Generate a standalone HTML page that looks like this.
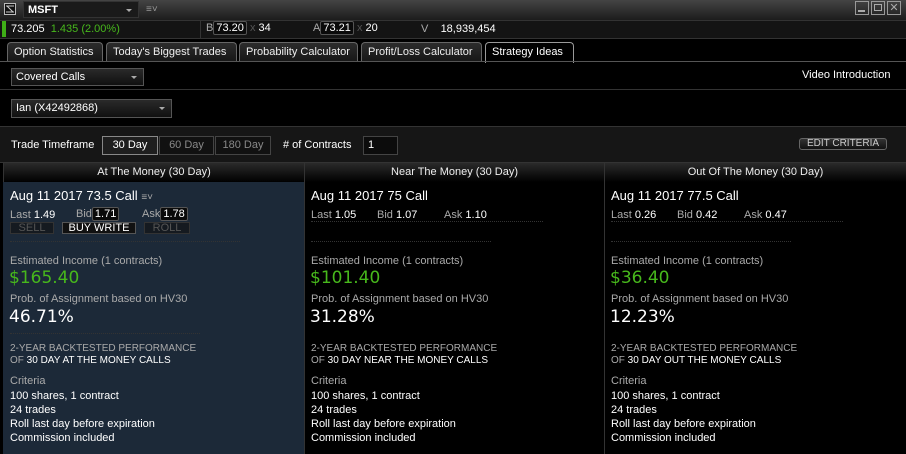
<!DOCTYPE html>
<html><head><meta charset="utf-8"><style>
*{margin:0;padding:0;box-sizing:border-box}
body{width:906px;height:454px;background:#000;font-family:"Liberation Sans",Tahoma,sans-serif;font-size:11px;color:#e8e8e8;position:relative;overflow:hidden}
.a{position:absolute;white-space:nowrap}
.dd{position:absolute;border:1px solid #555;background:linear-gradient(#2a2a2a,#101010);color:#fff;padding-left:4px;line-height:16px}
.dd:after{content:"";position:absolute;right:6px;top:7px;border-left:3px solid transparent;border-right:3px solid transparent;border-top:3px solid #aaa}
.tab{position:absolute;top:42px;height:20px;border:1px solid #666;border-bottom:none;border-radius:4px 4px 0 0;background:linear-gradient(#2c2c2c,#161616);color:#eee;line-height:19px;padding:0 6px}
.btn{position:absolute;border:1px solid #444;background:#111;color:#888;text-align:center;line-height:17px;font-size:11px}
.hdr{position:absolute;top:163px;height:19px;background:linear-gradient(#2a2a2a,#000);color:#eee;text-align:center;line-height:18px;border-left:1px solid #333}
.col{position:absolute;top:182px;height:272px}
.g{color:#aaa}.w{color:#fff}
.big{font-size:17px;color:#fff;font-family:"DejaVu Sans",sans-serif}
.grn{font-size:17px;color:#47b81c;font-family:"DejaVu Sans",sans-serif}
.dots{position:absolute;border-top:1px dotted #333;height:0}
.box{border:1px solid #555;border-radius:2px;padding:0 2px;background:#0a0a0a}
</style></head><body>
<div class="a" style="left:0;top:0;width:906px;height:20px;background:linear-gradient(#444,#1c1c1c)"></div>
<div class="a" style="left:4px;top:3px;width:12px;height:12px;border:1px solid #bbb;background:#111"><svg width="10" height="10" style="position:absolute;left:0;top:0"><path d="M1 2h8M1 8h8M2 2l6 6" stroke="#ccc" stroke-width="1"/></svg></div>
<div class="dd" style="left:23px;top:1px;width:116px;height:17px;font-weight:bold;background:#1a1a1a;border-color:#333">MSFT</div>
<div class="a" style="left:146px;top:4px;color:#999;font-size:10px">≡˅</div>
<div class="a" style="left:855px;top:1px;width:14px;height:14px;border:1px solid #999"></div>
<div class="a" style="left:858px;top:10px;width:7px;height:2px;background:#aaa"></div>
<div class="a" style="left:871px;top:1px;width:14px;height:14px;border:1px solid #999"></div>
<div class="a" style="left:874px;top:4px;width:8px;height:7px;border:1px solid #aaa"></div>
<div class="a" style="left:887px;top:1px;width:14px;height:14px;border:1px solid #999;color:#aaa;font-size:11px;text-align:center;line-height:12px">✕</div>
<div class="a" style="left:0;top:20px;width:906px;height:19px;background:#141414;border-top:1px solid #333;border-bottom:1px solid #333"></div>
<div class="a" style="left:200px;top:20px;width:1px;height:19px;background:#333"></div>
<div class="a" style="left:2px;top:21px;width:4px;height:16px;background:#3fae17"></div>
<div class="a" style="left:11px;top:23px;color:#fff">73.205 <span style="color:#47b81c">&nbsp;1.435 (2.00%)</span></div>
<div class="a" style="left:206px;top:22px;color:#aaa">B<span class="box" style="color:#fff">73.20</span> <span style="color:#555">x</span> <span style="color:#fff">34</span></div>
<div class="a" style="left:313px;top:22px;color:#aaa">A<span class="box" style="color:#fff">73.21</span> <span style="color:#555">x</span> <span style="color:#fff">20</span></div>
<div class="a" style="left:421px;top:23px;color:#aaa">V &nbsp;&nbsp;&nbsp;<span style="color:#fff">18,939,454</span></div>
<div class="tab" style="left:7px;width:96px">Option Statistics</div>
<div class="tab" style="left:106px;width:131px">Today's Biggest Trades</div>
<div class="tab" style="left:239px;width:119px">Probability Calculator</div>
<div class="tab" style="left:361px;width:121px">Profit/Loss Calculator</div>
<div class="tab" style="left:485px;width:89px;background:#000;border-color:#999;height:21px;color:#fff">Strategy Ideas</div>
<div class="a" style="left:0;top:61px;width:906px;height:1px;background:#555"></div>
<div class="dd" style="left:11px;top:68px;width:133px;height:18px">Covered Calls</div>
<div class="a" style="left:802px;top:69px;color:#fff">Video Introduction</div>
<div class="a" style="left:0;top:89px;width:906px;height:1px;background:#333"></div>
<div class="dd" style="left:11px;top:99px;width:161px;height:19px;line-height:17px">Ian (X42492868)</div>
<div class="a" style="left:0;top:126px;width:906px;height:1px;background:#333"></div>
<div class="a" style="left:0;top:127px;width:906px;height:36px;background:#161616"></div>
<div class="a" style="left:11px;top:139px;color:#fff">Trade Timeframe</div>
<div class="btn" style="left:102px;top:136px;width:56px;height:19px;border-color:#888;background:#1e1e1e;color:#fff">30 Day</div>
<div class="btn" style="left:159px;top:136px;width:55px;height:19px">60 Day</div>
<div class="btn" style="left:215px;top:136px;width:56px;height:19px">180 Day</div>
<div class="a" style="left:283px;top:139px;color:#fff"># of Contracts</div>
<div class="a" style="left:363px;top:136px;width:35px;height:19px;border:1px solid #444;background:#0c0c0c;color:#fff;padding-left:4px;line-height:17px">1</div>
<div class="btn" style="left:799px;top:138px;width:88px;height:12px;line-height:10px;font-size:10px;border-color:#666;border-radius:3px;background:linear-gradient(#333,#111);color:#ccc">EDIT CRITERIA</div>
<div class="a" style="left:0;top:162px;width:906px;height:1px;background:#333"></div>
<div class="hdr" style="left:3px;width:301px">At The Money (30 Day)</div>
<div class="hdr" style="left:304px;width:300px">Near The Money (30 Day)</div>
<div class="hdr" style="left:604px;width:302px">Out Of The Money (30 Day)</div>
<div class="col" style="left:3px;width:301px;background:#1c2938"></div>
<div class="col" style="left:304px;width:300px;border-left:1px solid #333"></div>
<div class="col" style="left:604px;width:302px;border-left:1px solid #333"></div>

<div class="a" style="left:10px;top:188px;font-size:13px;color:#fff">Aug 11 2017 73.5 Call <span style="font-size:10px;color:#aaa">≡˅</span></div>
<div class="a" style="left:10px;top:209px"><span class="g">Last</span> <span class="w">1.49</span></div>
<div class="a" style="left:76px;top:208px"><span class="g">Bid</span><span class="box w">1.71</span></div>
<div class="a" style="left:142px;top:208px"><span class="g">Ask</span><span class="box w">1.78</span></div>
<div class="btn" style="left:10px;top:222px;width:44px;height:12px;line-height:10px;color:#555;border-color:#333;background:#151a20">SELL</div>
<div class="btn" style="left:62px;top:222px;width:74px;height:12px;line-height:10px;color:#fff;border-color:#555;background:#111">BUY WRITE</div>
<div class="btn" style="left:144px;top:222px;width:46px;height:12px;line-height:10px;color:#555;border-color:#333;background:#151a20">ROLL</div>
<div class="dots" style="left:10px;top:241px;width:230px"></div>
<div class="a g" style="left:10px;top:255px">Estimated Income (1 contracts)</div>
<div class="a grn" style="left:9px;top:268px">$165.40</div>
<div class="a g" style="left:10px;top:293px">Prob. of Assignment based on HV30</div>
<div class="a big" style="left:9px;top:307px">46.71%</div>
<div class="dots" style="left:10px;top:333px;width:190px"></div>
<div class="a g" style="left:10px;top:343px;font-size:10px">2-YEAR BACKTESTED PERFORMANCE</div>
<div class="a" style="left:10px;top:355px;font-size:10px"><span class="g">OF</span> <span class="w">30 DAY AT THE MONEY CALLS</span></div>
<div class="a g" style="left:10px;top:375px">Criteria</div>
<div class="a w" style="left:10px;top:390px">100 shares, 1 contract</div>
<div class="a w" style="left:10px;top:404px">24 trades</div>
<div class="a w" style="left:10px;top:418px">Roll last day before expiration</div>
<div class="a w" style="left:10px;top:432px">Commission included</div>

<div class="a" style="left:311px;top:188px;font-size:13px;color:#fff">Aug 11 2017 75 Call</div>
<div class="a" style="left:311px;top:209px"><span class="g">Last</span> <span class="w">1.05</span></div>
<div class="a" style="left:377px;top:209px"><span class="g">Bid</span> <span class="w">1.07</span></div>
<div class="a" style="left:444px;top:209px"><span class="g">Ask</span> <span class="w">1.10</span></div>
<div class="dots" style="left:311px;top:221px;width:232px"></div>
<div class="dots" style="left:311px;top:241px;width:180px"></div>
<div class="a g" style="left:311px;top:255px">Estimated Income (1 contracts)</div>
<div class="a grn" style="left:310px;top:268px">$101.40</div>
<div class="a g" style="left:311px;top:293px">Prob. of Assignment based on HV30</div>
<div class="a big" style="left:310px;top:307px">31.28%</div>
<div class="a g" style="left:311px;top:343px;font-size:10px">2-YEAR BACKTESTED PERFORMANCE</div>
<div class="a" style="left:311px;top:355px;font-size:10px"><span class="g">OF</span> <span class="w">30 DAY NEAR THE MONEY CALLS</span></div>
<div class="a g" style="left:311px;top:375px">Criteria</div>
<div class="a w" style="left:311px;top:390px">100 shares, 1 contract</div>
<div class="a w" style="left:311px;top:404px">24 trades</div>
<div class="a w" style="left:311px;top:418px">Roll last day before expiration</div>
<div class="a w" style="left:311px;top:432px">Commission included</div>

<div class="a" style="left:611px;top:188px;font-size:13px;color:#fff">Aug 11 2017 77.5 Call</div>
<div class="a" style="left:611px;top:209px"><span class="g">Last</span> <span class="w">0.26</span></div>
<div class="a" style="left:677px;top:209px"><span class="g">Bid</span> <span class="w">0.42</span></div>
<div class="a" style="left:744px;top:209px"><span class="g">Ask</span> <span class="w">0.47</span></div>
<div class="dots" style="left:611px;top:221px;width:232px"></div>
<div class="dots" style="left:611px;top:241px;width:180px"></div>
<div class="a g" style="left:611px;top:255px">Estimated Income (1 contracts)</div>
<div class="a grn" style="left:610px;top:268px">$36.40</div>
<div class="a g" style="left:611px;top:293px">Prob. of Assignment based on HV30</div>
<div class="a big" style="left:610px;top:307px">12.23%</div>
<div class="a g" style="left:611px;top:343px;font-size:10px">2-YEAR BACKTESTED PERFORMANCE</div>
<div class="a" style="left:611px;top:355px;font-size:10px"><span class="g">OF</span> <span class="w">30 DAY OUT THE MONEY CALLS</span></div>
<div class="a g" style="left:611px;top:375px">Criteria</div>
<div class="a w" style="left:611px;top:390px">100 shares, 1 contract</div>
<div class="a w" style="left:611px;top:404px">24 trades</div>
<div class="a w" style="left:611px;top:418px">Roll last day before expiration</div>
<div class="a w" style="left:611px;top:432px">Commission included</div>
</body></html>
